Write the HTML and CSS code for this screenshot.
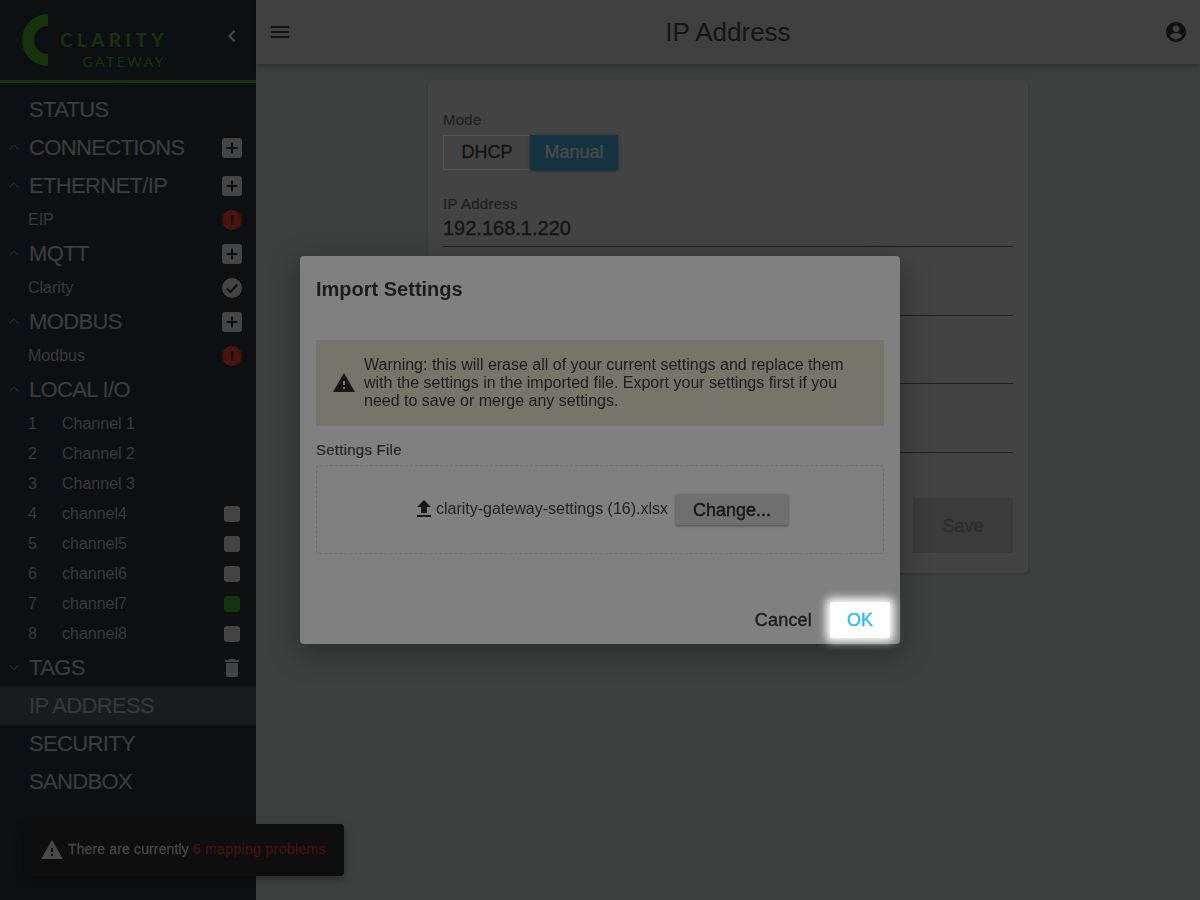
FILE: index.html
```html
<!DOCTYPE html>
<html lang="en">
<head>
<meta charset="utf-8">
<title>IP Address</title>
<link rel="stylesheet" href="styles.css">
</head>
<body>
<div class="app">
  <aside class="sidebar">
    <div class="brand">
      <svg class="logo-mark" width="26" height="52" viewBox="0 0 26 52"><path d="M26 0A26 26 0 0 0 26 52V40A14 14 0 0 1 26 12Z"/></svg>
      <div class="logo-text"><div class="logo-a">CLARITY</div><div class="logo-b">GATEWAY</div></div>
      <svg class="collapse" width="24" height="24" viewBox="0 0 24 24"><path d="M15.400 7.400 14 6l-6 6 6 6 1.400-1.400L10.800 12z"/></svg>
    </div>
    <nav class="nav">
      <div class="head"><span class="name">STATUS</span></div>
      <div class="head"><svg class="chev" viewBox="0 0 12 8"><path d="M1.500 6.500 6 2l4.500 4.500" /></svg><span class="name">CONNECTIONS</span><span class="plus"><svg viewBox="0 0 20 20"><path d="M10 4.500v11M4.500 10h11"/></svg></span></div>
      <div class="head"><svg class="chev" viewBox="0 0 12 8"><path d="M1.500 6.500 6 2l4.500 4.500" /></svg><span class="name">ETHERNET/IP</span><span class="plus"><svg viewBox="0 0 20 20"><path d="M10 4.500v11M4.500 10h11"/></svg></span></div>
      <div class="sub"><span class="sub-name">EIP</span><span class="alert">!</span></div>
      <div class="head"><svg class="chev" viewBox="0 0 12 8"><path d="M1.500 6.500 6 2l4.500 4.500" /></svg><span class="name">MQTT</span><span class="plus"><svg viewBox="0 0 20 20"><path d="M10 4.500v11M4.500 10h11"/></svg></span></div>
      <div class="sub"><span class="sub-name">Clarity</span><span class="okdot"><svg viewBox="0 0 20 20"><path d="M4.800 10.500 8.400 14l6.800-7.500"/></svg></span></div>
      <div class="head"><svg class="chev" viewBox="0 0 12 8"><path d="M1.500 6.500 6 2l4.500 4.500" /></svg><span class="name">MODBUS</span><span class="plus"><svg viewBox="0 0 20 20"><path d="M10 4.500v11M4.500 10h11"/></svg></span></div>
      <div class="sub"><span class="sub-name">Modbus</span><span class="alert">!</span></div>
      <div class="head"><svg class="chev" viewBox="0 0 12 8"><path d="M1.500 6.500 6 2l4.500 4.500" /></svg><span class="name">LOCAL I/O</span></div>
      <div class="chan"><span class="num">1</span><span class="sub-name">Channel 1</span></div>
      <div class="chan"><span class="num">2</span><span class="sub-name">Channel 2</span></div>
      <div class="chan"><span class="num">3</span><span class="sub-name">Channel 3</span></div>
      <div class="chan"><span class="num">4</span><span class="sub-name">channel4</span><span class="box"></span></div>
      <div class="chan"><span class="num">5</span><span class="sub-name">channel5</span><span class="box"></span></div>
      <div class="chan"><span class="num">6</span><span class="sub-name">channel6</span><span class="box"></span></div>
      <div class="chan"><span class="num">7</span><span class="sub-name">channel7</span><span class="box on"></span></div>
      <div class="chan"><span class="num">8</span><span class="sub-name">channel8</span><span class="box"></span></div>
      <div class="head"><svg class="chev" viewBox="0 0 12 8"><path d="M1.500 2 6 6.500 10.500 2" /></svg><span class="name">TAGS</span><svg class="trash" viewBox="0 0 24 24"><path d="M6 19c0 1.100.9 2 2 2h8c1.100 0 2-.9 2-2V7H6v12zM19 4h-3.500l-1-1h-5l-1 1H5v2h14V4z"/></svg></div>
      <div class="head active"><span class="name">IP ADDRESS</span></div>
      <div class="head"><span class="name">SECURITY</span></div>
      <div class="head"><span class="name">SANDBOX</span></div>
    </nav>
  </aside>
  <div class="main">
    <header class="topbar">
      <svg class="tb-icon" viewBox="0 0 24 24"><path d="M3 18h18v-2H3v2zm0-5h18v-2H3v2zm0-7v2h18V6H3z"/></svg>
      <h1 class="title">IP Address</h1>
      <svg class="tb-icon" viewBox="0 0 24 24"><path d="M12 2C6.480 2 2 6.480 2 12s4.480 10 10 10 10-4.480 10-10S17.520 2 12 2zm0 3.500a3.300 3.300 0 1 1 0 6.600 3.300 3.300 0 0 1 0-6.600zM12 19.200c-2.500 0-4.700-1.300-6-3.200.03-2 4-3.100 6-3.100s5.970 1.100 6 3.100c-1.300 1.900-3.500 3.200-6 3.200z"/></svg>
    </header>
    <section class="card">
      <div class="label">Mode</div>
      <div class="toggle"><span class="t-off">DHCP</span><span class="t-on">Manual</span></div>
      <div class="field first"><div class="label">IP Address</div><div class="value">192.168.1.220</div></div>
      <div class="field"></div>
      <div class="field short"></div>
      <div class="field"></div>
      <div class="card-foot"><span class="save">Save</span></div>
    </section>
  </div>
</div>

<div class="toast">
  <svg class="toast-icon" viewBox="0 0 24 24"><path d="M1 21h22L12 2 1 21zm12-3h-2v-2h2v2zm0-4h-2v-4h2v4z"/></svg>
  <span>There are currently <span class="problems">6 mapping problems</span></span>
</div>

<div class="backdrop">
  <div class="dialog" role="dialog">
    <h2 class="d-title">Import Settings</h2>
    <div class="warning">
      <svg class="w-icon" viewBox="0 0 24 24"><path d="M1 21h22L12 2 1 21zm12-3h-2v-2h2v2zm0-4h-2v-4h2v4z"/></svg>
      <p>Warning: this will erase all of your current settings and replace them with the settings in the imported file. Export your settings first if you need to save or merge any settings.</p>
    </div>
    <div class="file-label">Settings File</div>
    <div class="dropzone">
      <svg class="up-icon" viewBox="0 0 24 24"><path d="M9 16h6v-6h4l-7-7-7 7h4v6zm-4 2h14v2H5v-2z"/></svg>
      <span class="file-name">clarity-gateway-settings (16).xlsx</span>
      <span class="change">Change...</span>
    </div>
    <div class="actions">
      <span class="cancel">Cancel</span>
      <span class="ok">OK</span>
    </div>
  </div>
</div>
</body>
</html>
```
FILE: styles.css
```css
* { box-sizing: border-box; }
html, body { margin: 0; height: 100%; }
body { font-family: "Liberation Sans", Arial, sans-serif; background: #3f3f3f; overflow: hidden; }
.app { display: flex; height: 900px; }

.sidebar { width: 256px; flex: none; background: #0d1013; color: #3c3c3c; }
.brand { height: 83px; border-bottom: 3px solid #17330e; display: flex; align-items: flex-start; padding: 14px 12px 0 22px; }
.logo-mark { flex: none; fill: #17330e; }
.logo-text { width: 104px; margin-left: 12px; padding-top: 15px; text-align: right; color: #17330e; font-family: Lato, "Liberation Sans", sans-serif; font-weight: 700; }
.logo-a { font-size: 19px; line-height: 22px; letter-spacing: 4.400px; margin-right: -3px; }
.logo-b { font-size: 14px; line-height: 18px; letter-spacing: 2.500px; margin-right: -2px; margin-top: 2px; font-weight: 400; }
.collapse { margin-left: auto; margin-top: 10px; fill: #4a4a4a; }

.nav { padding-top: 8px; }
.head { height: 38px; display: flex; align-items: center; padding: 0 12px 0 29px; position: relative; }
.name { font-size: 22px; flex: 1; letter-spacing: -.65px; -webkit-text-stroke: .2px; }
.active { background: #191b1d; }
.active .name { color: #383838; }
.chev { position: absolute; left: 8px; top: 50%; margin-top: -5px; width: 12px; height: 8px; fill: none; stroke: #26282a; stroke-width: 1.200; }
.plus { width: 20px; height: 20px; border-radius: 3px; background: #444; display: block; margin-right: 2px; }
.plus svg { display: block; fill: none; stroke: #0d1013; stroke-width: 2; }
.trash { width: 24px; height: 24px; fill: #444; }
.sub { height: 30px; display: flex; align-items: center; padding: 0 14px 0 28px; }
.sub-name { font-size: 16px; flex: 1; color: #3a3a3a; }
.alert { width: 20px; height: 20px; border-radius: 50%; background: #4a130e; color: #0d1013; font-size: 15px; font-weight: 700; text-align: center; line-height: 20px; }
.okdot { width: 20px; height: 20px; border-radius: 50%; background: #444; display: block; }
.okdot svg { display: block; fill: none; stroke: #0d1013; stroke-width: 2.200; }
.chan { height: 30px; display: flex; align-items: center; padding: 0 16px 0 28px; }
.num { width: 34px; font-size: 16px; color: #3a3a3a; }
.box { width: 16px; height: 16px; border-radius: 3px; background: #444; }
.box.on { background: #17330e; }

.main { flex: 1; min-width: 0; display: flex; flex-direction: column; background: #3e3f3f; }
.topbar { height: 64px; flex: none; background: #404040; display: flex; align-items: center; justify-content: space-between; padding: 0 12px; box-shadow: 0 2px 6px rgba(0,0,0,.3); }
.tb-icon { width: 24px; height: 24px; fill: #111; }
.title { margin: 0; font-size: 26px; font-weight: 400; color: #141414; }

.card { width: 600px; margin: 16px auto 0; background: #434343; border-radius: 4px; padding: 32px 15px 20px; height: 493px; box-shadow: 0 1px 3px rgba(0,0,0,.2); }
.label { font-size: 15px; line-height: 16px; color: #1f1f1f; letter-spacing: .25px; -webkit-text-stroke: .2px; }
.toggle { display: flex; margin-top: 7px; width: 175px; height: 35px; }
.t-off { width: 87px; border: 1px solid #555; border-right: 0; font-size: 18px; color: #141414; display: flex; align-items: center; justify-content: center; -webkit-text-stroke: .4px; }
.t-on { width: 88px; background: #12333f; font-size: 18px; color: #4a4a4a; display: flex; align-items: center; justify-content: center; box-shadow: 0 1px 3px rgba(0,0,0,.4); -webkit-text-stroke: .4px; }
.field { height: 69px; border-bottom: 1px solid #1f1f1f; }
.field.first { margin-top: 26px; height: 51px; }
.field.short { height: 68px; }
.value { font-size: 20px; line-height: 24px; color: #141414; margin-top: 4px; -webkit-text-stroke: .3px; }
.card-foot { display: flex; justify-content: flex-end; margin-top: 45px; }
.save { width: 100px; height: 55px; padding-top: 1px; background: #3b3b3b; color: #2d2d2d; font-size: 18px; display: flex; align-items: center; justify-content: center; -webkit-text-stroke: .4px; }

.toast { position: fixed; left: 24px; top: 824px; width: 320px; height: 52px; background: #0e0e0e; border-radius: 4px; display: flex; align-items: center; padding: 0 0 2px 16px; color: #484848; font-size: 14px; letter-spacing: .14px; -webkit-text-stroke: .3px; box-shadow: 0 3px 8px rgba(0,0,0,.35); }
.toast-icon { width: 24px; height: 24px; fill: #484848; margin: 2px 4px 0 0; flex: none; }
.problems { color: #471310; letter-spacing: .35px; }

.backdrop { position: fixed; inset: 0; display: flex; align-items: center; justify-content: center; }
.dialog { width: 600px; height: 388px; background: #808080; border-radius: 4px; padding: 0 16px; box-shadow: 0 8px 30px rgba(0,0,0,.35); }
.d-title { margin: 0; padding-top: 21px; font-size: 20px; line-height: 24px; font-weight: 700; color: #1c1c1c; }
.warning { margin-top: 39px; height: 86px; background: #76756a; display: flex; align-items: center; padding: 0 16px; }
.w-icon { width: 24px; height: 24px; fill: #161616; flex: none; margin-right: 8px; }
.warning p { margin: 0; font-size: 16px; line-height: 18px; color: #1c1c1c; }
.file-label { margin-top: 15px; font-size: 15px; line-height: 18px; color: #252525; letter-spacing: .25px; -webkit-text-stroke: .2px; }
.dropzone { margin-top: 6px; height: 89px; border: 1px dashed #6e6e6e; border-radius: 4px; display: flex; align-items: center; justify-content: center; }
.up-icon { width: 24px; height: 24px; fill: #161616; flex: none; margin-top: -2px; }
.file-name { font-size: 16px; color: #222; margin-top: -2px; }
.change { margin-left: 8px; width: 112px; height: 31px; padding-top: 1px; background: #6f6f6f; color: #161616; font-size: 18px; display: flex; align-items: center; justify-content: center; border-radius: 2px; box-shadow: 0 1px 3px rgba(0,0,0,.45); -webkit-text-stroke: .4px; }
.actions { display: flex; justify-content: flex-end; align-items: center; margin-top: 48px; margin-right: -6px; }
.cancel { font-size: 18px; color: #1c1c1c; margin-right: 18px; letter-spacing: .2px; -webkit-text-stroke: .4px; }
.ok { width: 60px; height: 36px; background: #fff; color: #2fb8f0; font-size: 18px; display: flex; align-items: center; justify-content: center; border-radius: 2px; box-shadow: 0 0 8px 4px #fff; -webkit-text-stroke: .4px; }
```
